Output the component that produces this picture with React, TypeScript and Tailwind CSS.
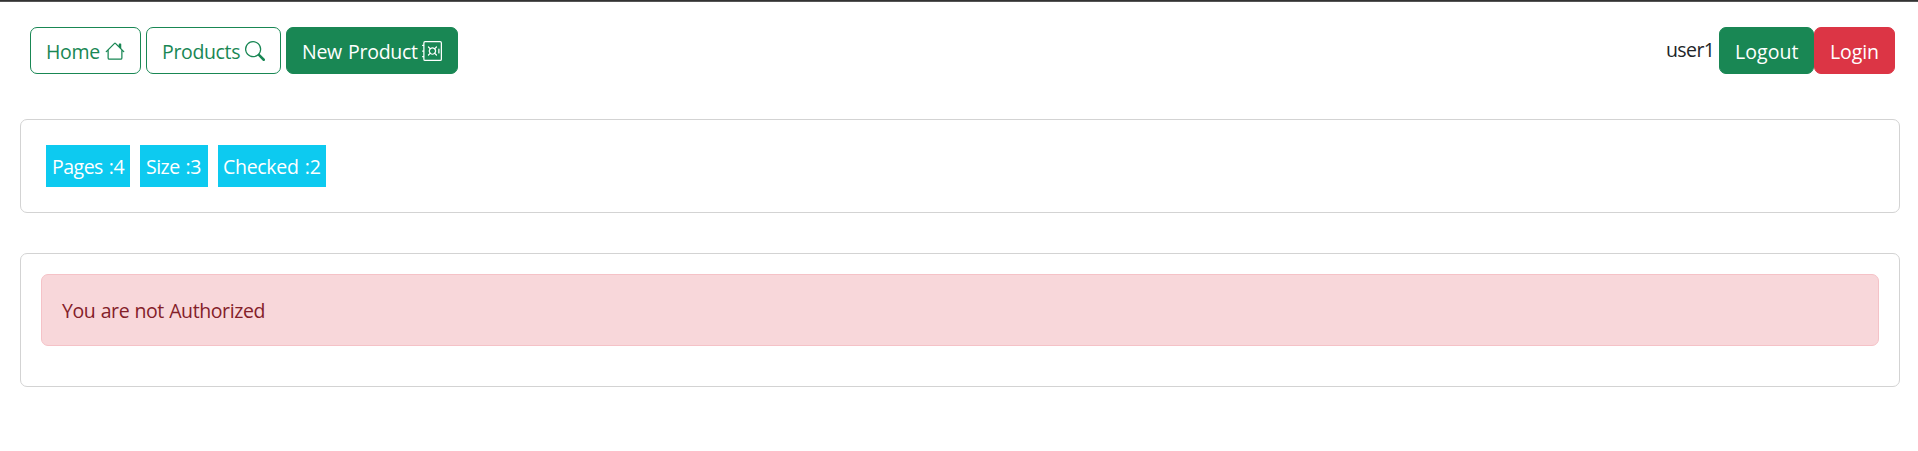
import type { ReactNode } from "react";
import { BsHouse, BsSafe, BsSearch } from "react-icons/bs";

const buttonBase =
  "flex h-[47px] items-center whitespace-nowrap rounded-[7px] border pl-[15px] pt-[2px]";

function Tag({ className, children }: { className: string; children: ReactNode }) {
  return (
    <span className={`flex h-[42px] items-center whitespace-nowrap bg-[#0dcaf0] pt-[2px] text-white ${className}`}>
      {children}
    </span>
  );
}

export default function App() {
  return (
    <div className="min-h-[451px] bg-white font-['Open_Sans','Noto_Sans',sans-serif] text-[19.5px] leading-[30px] text-[#212529]">
      <div className="h-[2px] border-b border-[#555] bg-[#333]" />
      <nav className="flex h-[117px] items-start justify-between pl-[30px] pr-[23px] pt-[25px]">
        <div className="flex gap-[5px]">
          <button className={`${buttonBase} w-[111px] border-[#198754] text-[#198754]`}>
            <span className="w-[59px] text-left tracking-[-0.3px]">Home</span>
            <BsHouse className="size-5 -translate-y-px" />
          </button>
          <button className={`${buttonBase} w-[135px] border-[#198754] text-[#198754]`}>
            <span className="w-[83px] text-left tracking-[-0.35px]">Products</span>
            <BsSearch className="size-5 -translate-y-px" />
          </button>
          <button className={`${buttonBase} w-[172px] border-[#198754] bg-[#198754] text-white`}>
            <span className="w-[120px] text-left tracking-[-0.3px] [word-spacing:1.5px]">New Product</span>
            <BsSafe className="size-5 -translate-y-px" />
          </button>
        </div>
        <div className="flex">
          <span className="mt-[8px] w-[53px] tracking-[-0.6px]">user1</span>
          <button className={`${buttonBase} w-[95px] border-[#198754] bg-[#198754] text-white tracking-[0.05px]`}>
            Logout
          </button>
          <button className={`${buttonBase} w-[81px] border-[#dc3545] bg-[#dc3545] text-white tracking-[-0.1px]`}>
            Login
          </button>
        </div>
      </nav>
      <main className="flex flex-col gap-10 pl-5 pr-[18px]">
        <section className="flex h-[94px] gap-[10px] rounded-[7px] border border-[#d3d3d3] pl-[25px] pt-[25px]">
          <Tag className="w-[84px] pl-[6px] tracking-[-0.5px] [word-spacing:1.3px]">Pages :4</Tag>
          <Tag className="w-[68px] pl-[6px] tracking-[-0.5px] [word-spacing:1.3px]">Size :3</Tag>
          <Tag className="w-[108px] pl-[5px] tracking-[-0.3px] [word-spacing:1.5px]">Checked :2</Tag>
        </section>
        <section className="h-[134px] rounded-[7px] border border-[#d3d3d3] p-5">
          <div
            role="alert"
            className="flex h-[72px] items-center rounded-[7px] border border-[#f5c2c7] bg-[#f8d7da] pl-5 pt-[2px] tracking-[-0.4px] text-[#842029] [word-spacing:0.6px]"
          >
            You are not Authorized
          </div>
        </section>
      </main>
    </div>
  );
}
